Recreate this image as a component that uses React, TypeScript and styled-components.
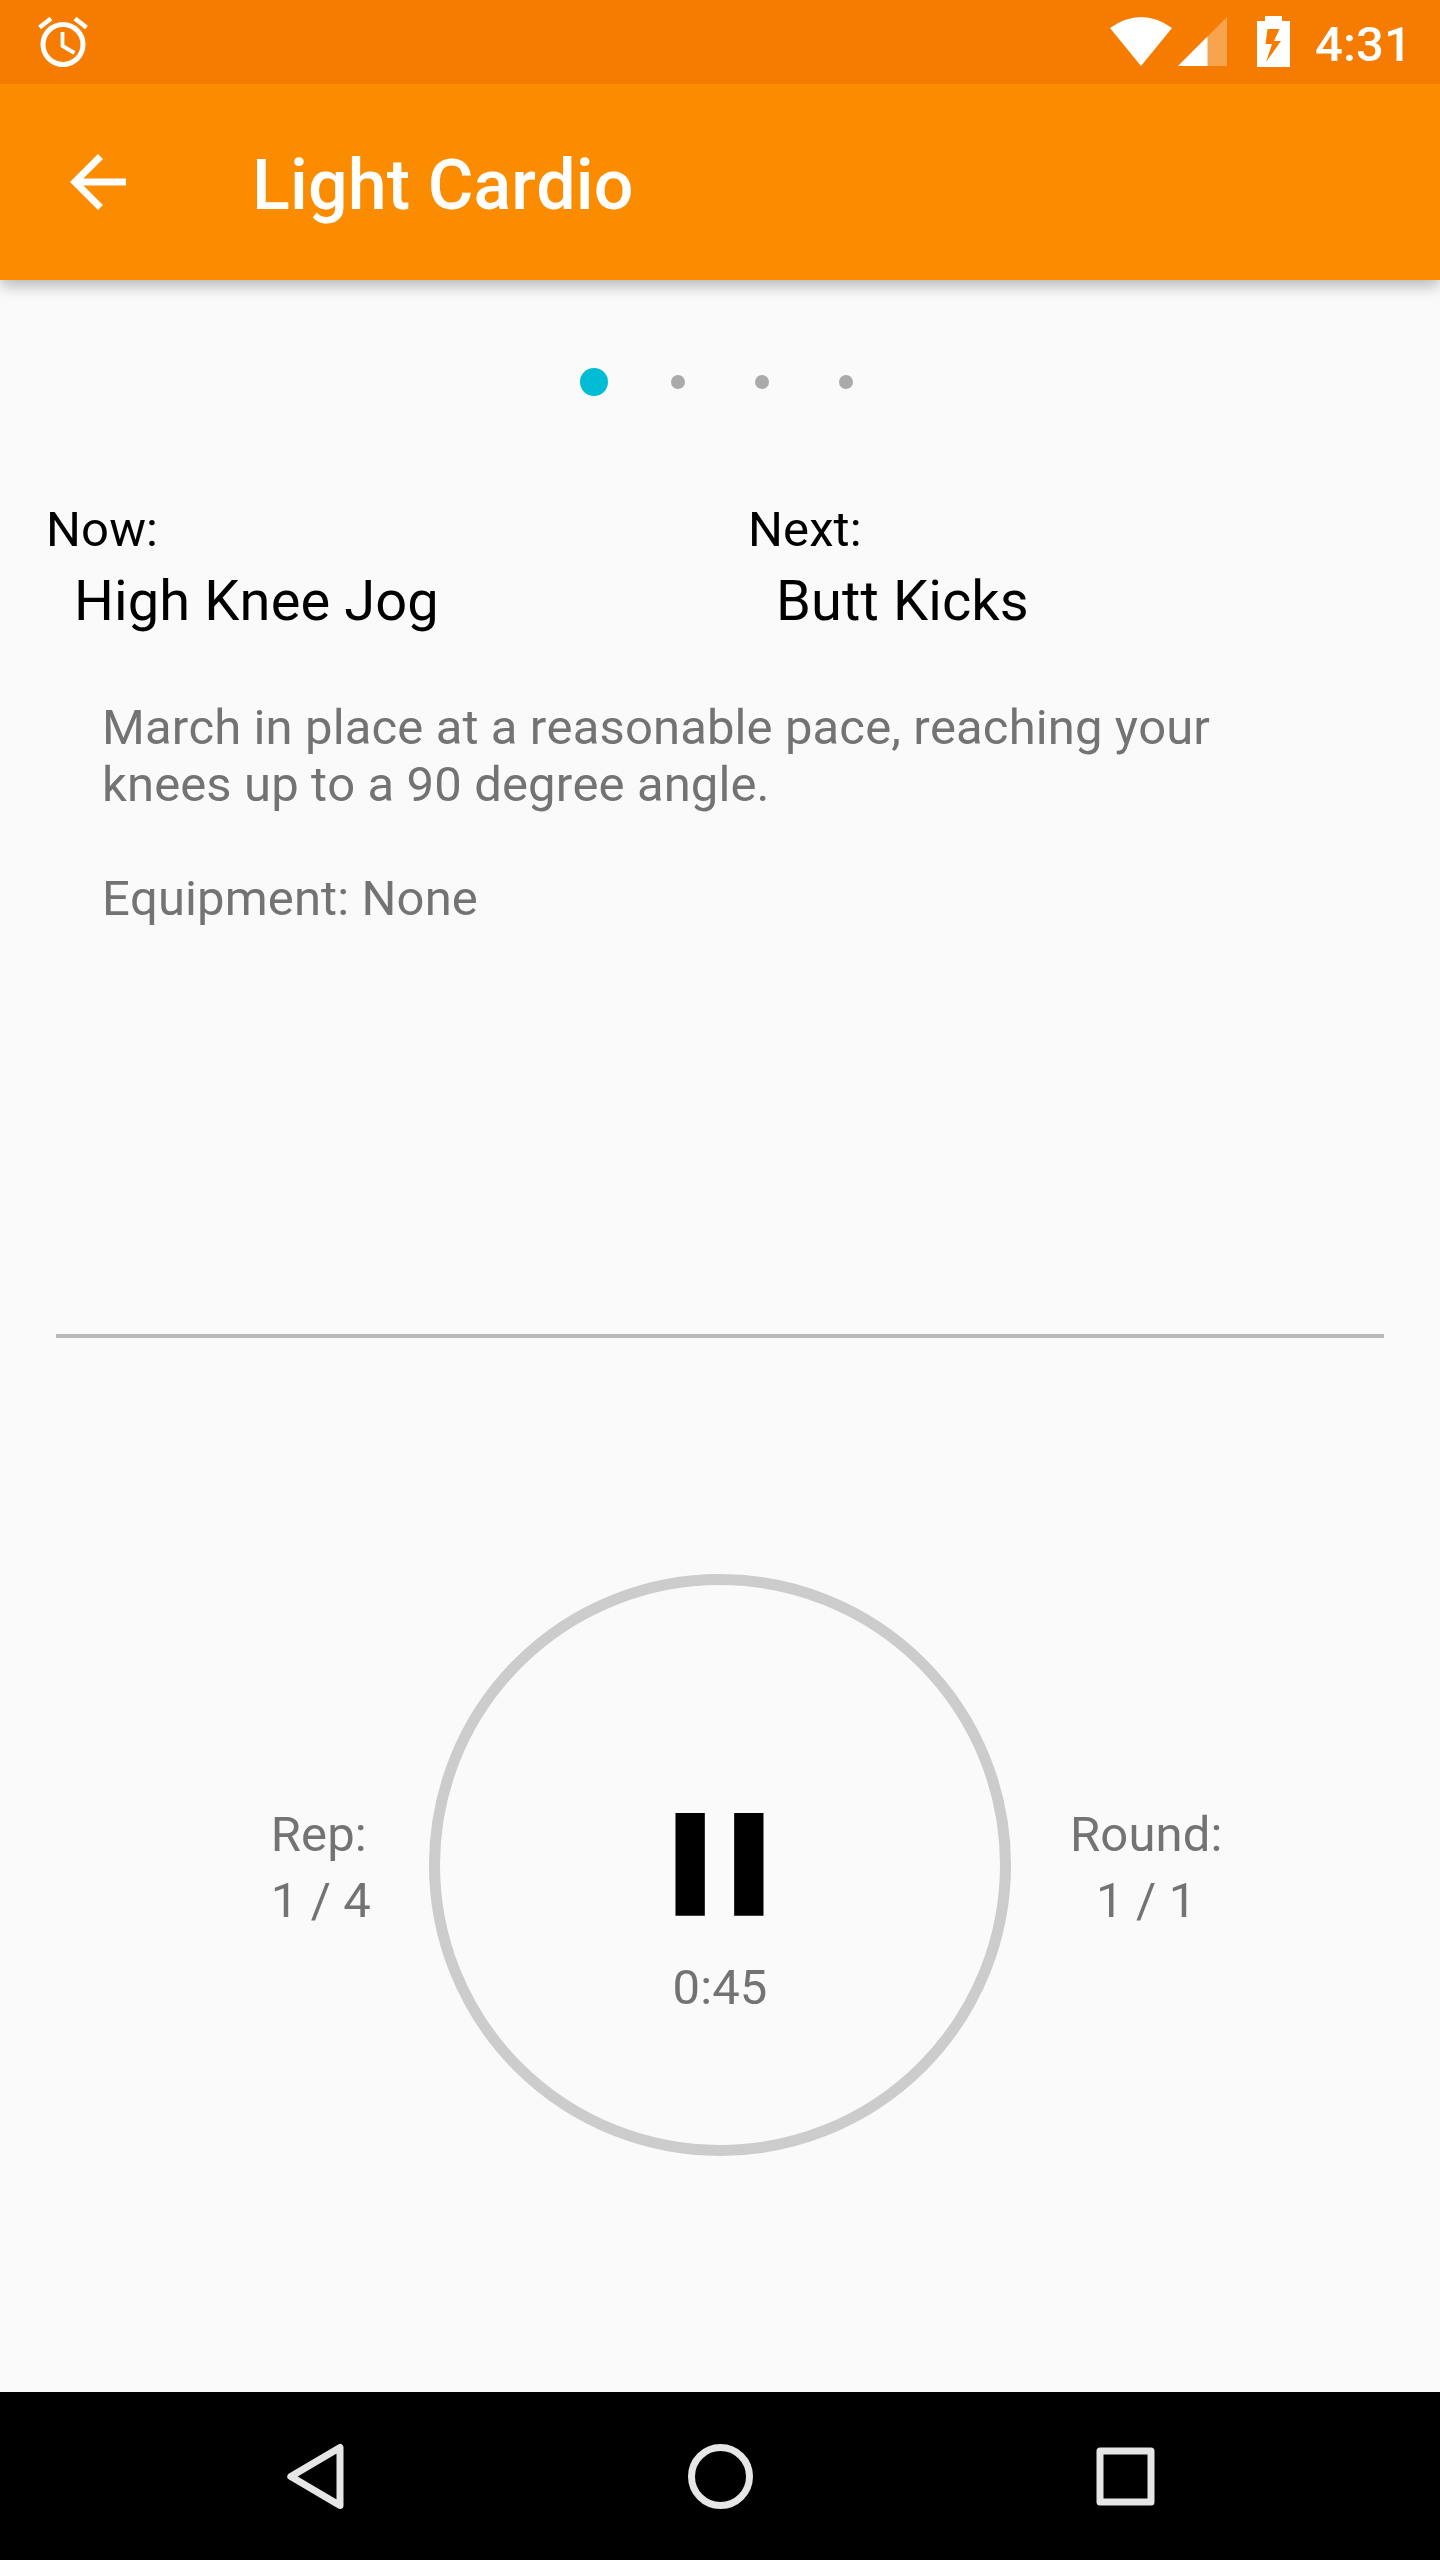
import React from 'react';
import styled, { createGlobalStyle } from 'styled-components';

const GlobalStyle = createGlobalStyle`
  body { margin: 0; background: #fafafa; }
  * { box-sizing: border-box; }
`;

const Screen = styled.div`
  display: flex;
  flex-direction: column;
  width: 1440px;
  height: 2560px;
  background: #fafafa;
  font-family: Roboto, 'Noto Sans', sans-serif;
  font-kerning: none;
  letter-spacing: 0.12px;
  overflow: hidden;
`;

const StatusBar = styled.header`
  flex: none;
  height: 84px;
  display: flex;
  justify-content: space-between;
  padding: 0 33px 0 32px;
  background: #f57c00;
  color: #fff;
  z-index: 2;
`;

const StatusIcons = styled.div`
  display: flex;
  align-items: flex-start;
`;

const Icon = styled.svg`
  display: block;
  flex: none;
`;

const Clock = styled.time`
  width: 92px;
  margin-left: 22px;
  font-size: 49px;
  font-weight: 500;
  line-height: 58px;
  padding-top: 16px;
  white-space: nowrap;
`;

const AppBar = styled.nav`
  flex: none;
  height: 196px;
  display: flex;
  align-items: center;
  padding-left: 56px;
  background: #fb8c00;
  color: #fff;
  box-shadow: 0 7px 14px -1px rgba(0, 0, 0, 0.27);
  z-index: 1;
`;

const BackButton = styled.button`
  width: 84px;
  height: 84px;
  padding: 0;
  border: 0;
  background: none;
  color: inherit;
`;

const Title = styled.h1`
  margin: 6px 0 0 112px;
  font-size: 70px;
  font-weight: 500;
  line-height: 82px;
`;

const Content = styled.main`
  flex: 1;
  display: flex;
  flex-direction: column;
`;

const Pager = styled.div`
  display: flex;
  align-items: center;
  justify-content: center;
  height: 28px;
  margin-top: 88px;
  gap: 56px;
`;

const DotSlot = styled.span`
  display: flex;
  align-items: center;
  justify-content: center;
  width: 28px;
  height: 28px;
`;

const Dot = styled.span<{ $active?: boolean }>`
  width: ${(p) => (p.$active ? 28 : 14)}px;
  height: ${(p) => (p.$active ? 28 : 14)}px;
  border-radius: 50%;
  background: ${(p) => (p.$active ? '#00bcd4' : '#aaaaaa')};
`;

const Exercises = styled.section`
  display: grid;
  grid-template-columns: 702px 1fr;
  margin: 101px 0 0 46px;
  color: #000;
`;

const Label = styled.div`
  height: 67px;
  font-size: 49px;
  line-height: 66px;
`;

const ExerciseName = styled.div`
  margin-left: 28px;
  font-size: 56px;
  line-height: 74px;
`;

const Description = styled.p`
  margin: 61px 0 0 102px;
  height: 635px;
  width: 1200px;
  font-size: 49px;
  line-height: 57px;
  color: #737373;
  white-space: pre-line;
`;

const Divider = styled.hr`
  width: 1328px;
  height: 4px;
  margin: 0 56px;
  border: 0;
  background: #bbbbbb;
`;

const TimerRow = styled.section`
  display: grid;
  grid-template-columns: 429px 582px 429px;
  align-items: center;
  margin-top: 236px;
  color: #737373;
  font-size: 49px;
  line-height: 66px;
`;

const Counter = styled.div<{ $side: 'left' | 'right' }>`
  display: flex;
  flex-direction: column;
  align-items: ${(p) => (p.$side === 'left' ? 'flex-start' : 'center')};
  justify-self: ${(p) => (p.$side === 'left' ? 'end' : 'start')};
  margin: ${(p) => (p.$side === 'left' ? '6px 58px 0 0' : '6px 0 0 59px')};
`;

const Dial = styled.button`
  width: 582px;
  height: 582px;
  border: 11px solid #cccccc;
  border-radius: 50%;
  background: none;
  padding: 191px 0 0;
  display: flex;
  flex-direction: column;
  align-items: center;
  color: inherit;
  font: inherit;
  font-kerning: none;
  letter-spacing: inherit;
`;

const TimeLeft = styled.span`
  line-height: 71px;
`;

const NavBar = styled.footer`
  flex: none;
  height: 168px;
  background: #000;
  display: grid;
  grid-template-columns: repeat(3, 405px);
  justify-content: center;
  align-items: center;
  justify-items: center;
`;

const NavIcon = styled(Icon).attrs({ viewBox: '-0.5 -0.5 70 70' })`
  width: 70px;
  height: 70px;
  fill: none;
  stroke: #e6e6e6;
  stroke-width: 7px;
  stroke-linejoin: round;
`;

const dots = [true, false, false, false];

export default function App() {
  return (
    <>
      <GlobalStyle />
      <Screen>
        <StatusBar>
          <Icon width="64" height="84" viewBox="0 0 64 84" fill="none" stroke="#fff">
            <circle cx="31" cy="44.5" r="20" strokeWidth="5" />
            <path d="M30.5 32v14l12 7" strokeWidth="3.8" />
            <path d="M7.5 27.5L19 18.500M54.5 27.5L43 18.5" strokeWidth="4.6" />
          </Icon>
          <StatusIcons>
            <Icon width="183" height="84" viewBox="0 0 183 84" fill="#fff">
              <path d="M0 28Q31 6 62 28L31 66Z" />
              <path d="M117 17V66H68Z" fillOpacity="0.3" />
              <path d="M97.5 36.5V66H68Z" />
              <path
                fillRule="evenodd"
                d="M147 21h8v-5h17v5h8v46h-33zM157.5 29L155.5 44H162L156 62L171 41H164L169.5 29Z"
              />
            </Icon>
            <Clock>4:31</Clock>
          </StatusIcons>
        </StatusBar>

        <AppBar>
          <BackButton aria-label="Back">
            <Icon width="84" height="84" viewBox="0 0 24 24" fill="#fff">
              <path d="M20 11H7.83l5.59-5.59L12 4l-8 8 8 8 1.41-1.41L7.83 13H20v-2z" />
            </Icon>
          </BackButton>
          <Title>Light Cardio</Title>
        </AppBar>

        <Content>
          <Pager>
            {dots.map((active, i) => (
              <DotSlot key={i}>
                <Dot $active={active} />
              </DotSlot>
            ))}
          </Pager>

          <Exercises>
            <div>
              <Label>Now:</Label>
              <ExerciseName>High Knee Jog</ExerciseName>
            </div>
            <div>
              <Label>Next:</Label>
              <ExerciseName>Butt Kicks</ExerciseName>
            </div>
          </Exercises>

          <Description>
            {'March in place at a reasonable pace, reaching your\nknees up to a 90 degree angle.\n\nEquipment: None'}
          </Description>

          <Divider />

          <TimerRow>
            <Counter $side="left">
              <span>Rep:</span>
              <span>1 / 4</span>
            </Counter>
            <Dial aria-label="Pause">
              <Icon width="176" height="176" viewBox="0.07 -0.05 24 24" fill="#000">
                <path d="M6 19h4V5H6v14zm8-14v14h4V5h-4z" />
              </Icon>
              <TimeLeft>0:45</TimeLeft>
            </Dial>
            <Counter $side="right">
              <span>Round:</span>
              <span>1 / 1</span>
            </Counter>
          </TimerRow>
        </Content>

        <NavBar>
          <NavIcon>
            <path d="M59.5 6V64L10.3 35Z" />
          </NavIcon>
          <NavIcon>
            <circle cx="35" cy="35" r="29" />
          </NavIcon>
          <NavIcon>
            <rect x="9.5" y="9.5" width="51" height="51" />
          </NavIcon>
        </NavBar>
      </Screen>
    </>
  );
}
